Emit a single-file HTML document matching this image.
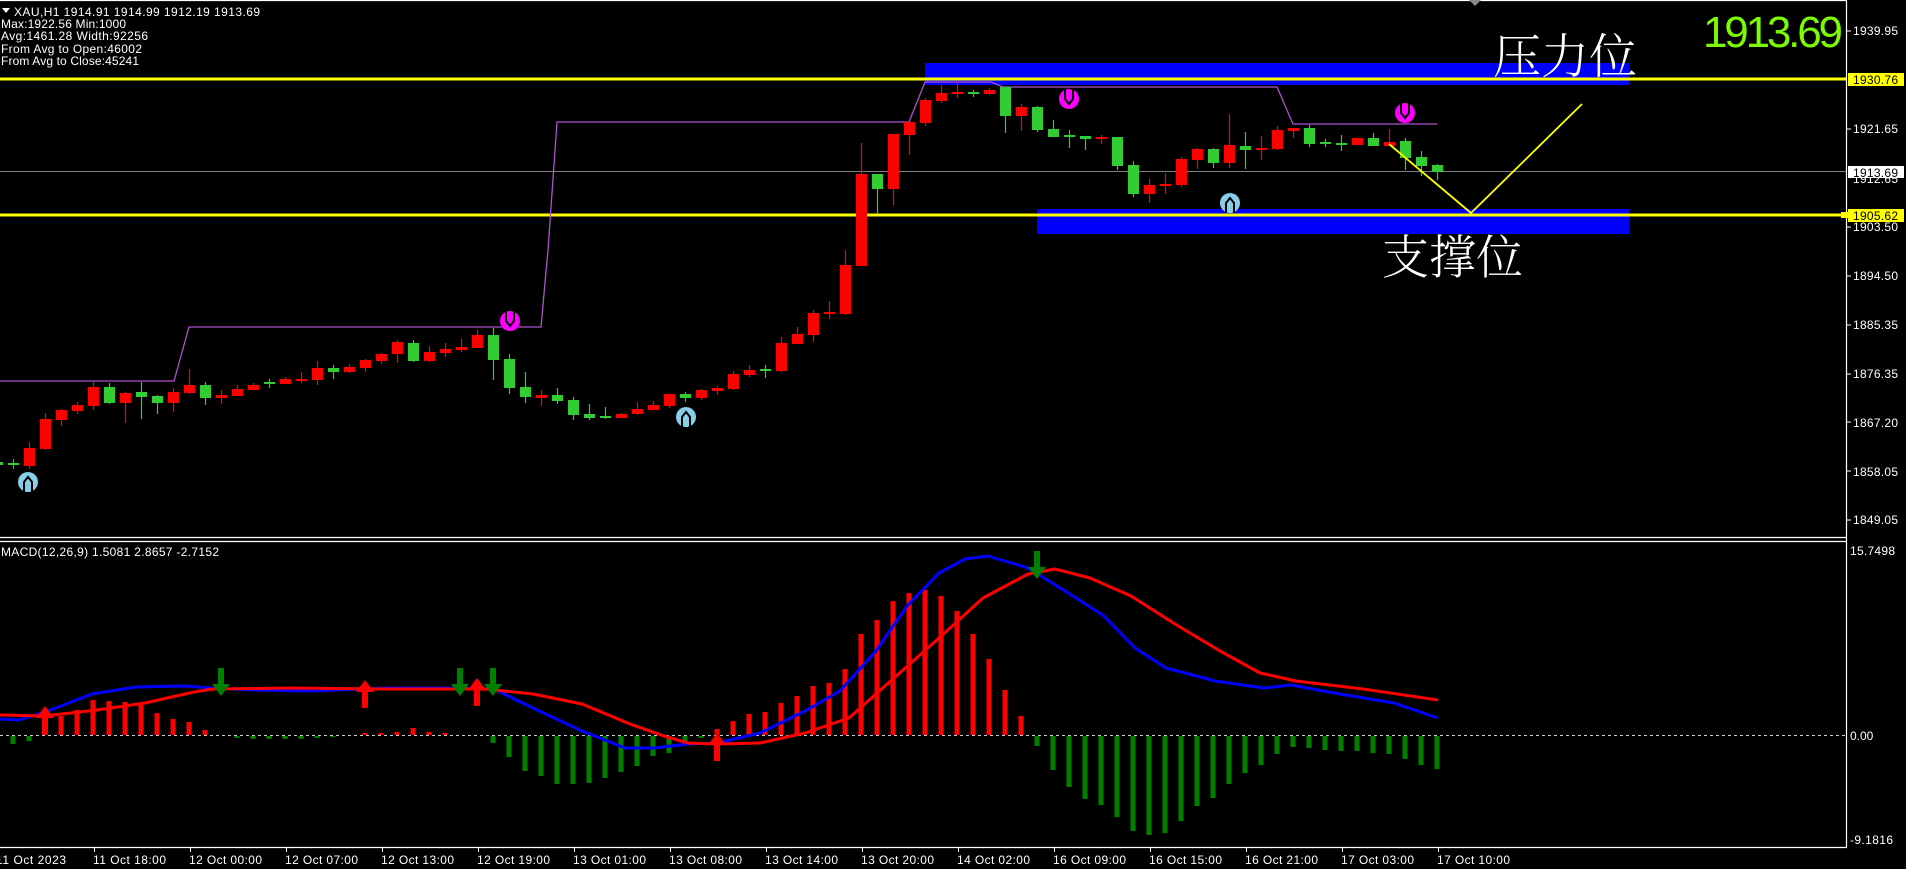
<!DOCTYPE html>
<html><head><meta charset="utf-8"><style>
html,body{margin:0;padding:0;background:#000;width:1906px;height:869px;overflow:hidden}
svg{display:block}
text{font-family:"Liberation Sans",sans-serif;fill:#fff}
</style></head><body>
<svg width="1906" height="869" viewBox="0 0 1906 869" xmlns="http://www.w3.org/2000/svg">
<rect width="1906" height="869" fill="#000"/>
<g stroke="#fff" stroke-width="1.2" fill="none">
<line x1="0" y1="0.5" x2="1847" y2="0.5"/>
<line x1="1846.5" y1="0" x2="1846.5" y2="848"/>
<line x1="0" y1="537.5" x2="1847" y2="537.5"/>
<line x1="0" y1="541.5" x2="1847" y2="541.5"/>
<line x1="0" y1="847.5" x2="1847" y2="847.5"/>
</g>
<polygon points="1469,0 1481,0 1475,6" fill="#888"/>
<rect x="925" y="63" width="704" height="22" fill="#0000ff"/>
<rect x="1037" y="209" width="592" height="25" fill="#0000ff"/>
<line x1="0" y1="171.5" x2="1846" y2="171.5" stroke="#808080" stroke-width="1"/>
<line x1="0" y1="79" x2="1846" y2="79" stroke="#ffff00" stroke-width="3"/>
<line x1="0" y1="215" x2="1846" y2="215" stroke="#ffff00" stroke-width="3"/>
<polyline fill="none" stroke="#b050d0" stroke-width="1.3" points="0,381 174,381 189,327 541,327 548,250 557,122 909,122 925,82 991,82 1003,87 1277,87 1293,124 1437,124"/>
<path stroke="#ff0000" stroke-width="1.2" fill="none" d="M29.5 442V469M45.5 413V450M61.5 409V426M77.5 402V414M93.5 382V410M125.5 392V423M173.5 388V412M189.5 369V394M221.5 390V404M237.5 385V396M253.5 383V390M285.5 377V384M301.5 372V383M317.5 361V385M349.5 364V373M365.5 359V372M381.5 353V364M397.5 340V363M429.5 346V362M445.5 343V357M461.5 339V352M477.5 330V348M541.5 390V406M621.5 413V418M637.5 402V415M653.5 401V410M669.5 394V408M701.5 389V400M717.5 386V395M733.5 371V390M749.5 365V377M781.5 337V372M797.5 327V344M813.5 310V342M829.5 301V319M845.5 250V315M861.5 143V266M893.5 134V205M909.5 122V155M925.5 98V126M941.5 85V103M957.5 81V98M989.5 88V95M1021.5 104V131M1101.5 135V144M1149.5 179V203M1165.5 173V194M1181.5 157V187M1197.5 148V169M1229.5 114V168M1261.5 136V160M1277.5 126V150M1293.5 128V138M1357.5 138V145M1389.5 129V146"/>
<path stroke="#32cd32" stroke-width="1.2" fill="none" d="M13.5 459V469M109.5 383V404M141.5 382V419M157.5 395V414M205.5 382V405M269.5 379V388M333.5 365V379M413.5 340V362M493.5 328V380M509.5 354V394M525.5 372V403M557.5 388V404M573.5 397V420M589.5 404V420M605.5 407V419M685.5 392V402M765.5 365V378M877.5 174V214M973.5 90V97M1005.5 87V133M1037.5 106V132M1053.5 120V137M1069.5 130V148M1085.5 136V150M1117.5 137V170M1133.5 161V197M1213.5 148V168M1245.5 132V169M1309.5 125V147M1325.5 139V147M1341.5 135V151M1373.5 133V146M1405.5 138V170M1421.5 151V176M1437.5 164V180M-2.5 455V470"/>
<g fill="#ff0000">
<rect x="24" y="448" width="11" height="18"/><rect x="40" y="419" width="11" height="30"/><rect x="56" y="410" width="11" height="10"/><rect x="72" y="405" width="11" height="6"/><rect x="88" y="387" width="11" height="19"/><rect x="120" y="393" width="11" height="10"/><rect x="168" y="392" width="11" height="11"/><rect x="184" y="385" width="11" height="8"/><rect x="216" y="395" width="11" height="3"/><rect x="232" y="389" width="11" height="7"/><rect x="248" y="385" width="11" height="5"/><rect x="280" y="379" width="11" height="5"/><rect x="296" y="379" width="11" height="2"/><rect x="312" y="368" width="11" height="12"/><rect x="344" y="367" width="11" height="5"/><rect x="360" y="360" width="11" height="8"/><rect x="376" y="354" width="11" height="7"/><rect x="392" y="342" width="11" height="12"/><rect x="424" y="352" width="11" height="9"/><rect x="440" y="349" width="11" height="4"/><rect x="456" y="347" width="11" height="3"/><rect x="472" y="335" width="11" height="13"/><rect x="536" y="395" width="11" height="3"/><rect x="616" y="414" width="11" height="4"/><rect x="632" y="409" width="11" height="5"/><rect x="648" y="405" width="11" height="5"/><rect x="664" y="394" width="11" height="12"/><rect x="696" y="390" width="11" height="8"/><rect x="712" y="388" width="11" height="3"/><rect x="728" y="374" width="11" height="15"/><rect x="744" y="370" width="11" height="5"/><rect x="776" y="343" width="11" height="28"/><rect x="792" y="334" width="11" height="10"/><rect x="808" y="313" width="11" height="22"/><rect x="824" y="312" width="11" height="2"/><rect x="840" y="265" width="11" height="49"/><rect x="856" y="174" width="11" height="92"/><rect x="888" y="134" width="11" height="55"/><rect x="904" y="122" width="11" height="13"/><rect x="920" y="100" width="11" height="23"/><rect x="936" y="93" width="11" height="8"/><rect x="952" y="92" width="11" height="2"/><rect x="984" y="90" width="11" height="4"/><rect x="1016" y="107" width="11" height="9"/><rect x="1096" y="137" width="11" height="2"/><rect x="1144" y="185" width="11" height="9"/><rect x="1160" y="184" width="11" height="2"/><rect x="1176" y="159" width="11" height="26"/><rect x="1192" y="149" width="11" height="11"/><rect x="1224" y="145" width="11" height="18"/><rect x="1256" y="148" width="11" height="2"/><rect x="1272" y="130" width="11" height="19"/><rect x="1288" y="128" width="11" height="3"/><rect x="1352" y="138" width="11" height="7"/><rect x="1384" y="142" width="11" height="4"/>
</g>
<g fill="#32cd32">
<rect x="8" y="463" width="11" height="2"/><rect x="104" y="387" width="11" height="16"/><rect x="136" y="392" width="11" height="5"/><rect x="152" y="396" width="11" height="7"/><rect x="200" y="385" width="11" height="13"/><rect x="264" y="382" width="11" height="2"/><rect x="328" y="368" width="11" height="4"/><rect x="408" y="343" width="11" height="18"/><rect x="488" y="335" width="11" height="25"/><rect x="504" y="359" width="11" height="29"/><rect x="520" y="387" width="11" height="10"/><rect x="552" y="395" width="11" height="6"/><rect x="568" y="400" width="11" height="15"/><rect x="584" y="414" width="11" height="4"/><rect x="600" y="416" width="11" height="2"/><rect x="680" y="394" width="11" height="4"/><rect x="760" y="369" width="11" height="2"/><rect x="872" y="174" width="11" height="15"/><rect x="968" y="92" width="11" height="2"/><rect x="1000" y="87" width="11" height="29"/><rect x="1032" y="107" width="11" height="23"/><rect x="1048" y="129" width="11" height="8"/><rect x="1064" y="135" width="11" height="2"/><rect x="1080" y="136" width="11" height="3"/><rect x="1112" y="137" width="11" height="29"/><rect x="1128" y="165" width="11" height="29"/><rect x="1208" y="149" width="11" height="14"/><rect x="1240" y="146" width="11" height="4"/><rect x="1304" y="128" width="11" height="16"/><rect x="1320" y="142" width="11" height="2"/><rect x="1336" y="143" width="11" height="2"/><rect x="1368" y="138" width="11" height="8"/><rect x="1400" y="141" width="11" height="17"/><rect x="1416" y="157" width="11" height="9"/><rect x="1432" y="165" width="11" height="7"/><rect x="-8" y="462" width="11" height="3"/>
</g>
<defs>
<g id="up"><circle cx="0" cy="0" r="10" fill="#87ceeb"/><path d="M-4 10V0L0-5L4 0V10" fill="none" stroke="#000" stroke-width="2"/><path d="M-2 10V-1L0-3L2-1V10Z" fill="#87ceeb"/></g>
<g id="dn"><circle cx="0" cy="0" r="10" fill="#ff00ff"/><path d="M-4 -10V0L0 5L4 0V-10" fill="none" stroke="#000" stroke-width="2"/></g>
</defs>
<use href="#up" x="28" y="482"/>
<use href="#up" x="686" y="417"/>
<use href="#up" x="1230" y="203"/>
<use href="#dn" x="510" y="321"/>
<use href="#dn" x="1069" y="99"/>
<use href="#dn" x="1405" y="113"/>
<polyline fill="none" stroke="#ffff00" stroke-width="1.8" points="1389,144 1471,213 1582,104"/>
<text x="1493" y="73" font-size="48" style='font-family:"Noto Serif CJK SC","Noto Sans CJK SC",serif;font-weight:300' fill="#fff">压力位</text>
<text x="1382" y="274" font-size="47" style='font-family:"Noto Serif CJK SC","Noto Sans CJK SC",serif;font-weight:300' fill="#fff">支撑位</text>
<path d="M2 8H10L6 13Z" fill="#fff"/>
<g font-size="12">
<text x="14" y="16" textLength="246">XAU,H1  1914.91 1914.99 1912.19 1913.69</text>
<text x="1" y="28" textLength="125">Max:1922.56 Min:1000</text>
<text x="1" y="40" textLength="147">Avg:1461.28 Width:92256</text>
<text x="1" y="53" textLength="141">From Avg to Open:46002</text>
<text x="1" y="65" textLength="138">From Avg to Close:45241</text>
</g>
<text x="1703" y="47" font-size="44" style="fill:#7cfc00" textLength="140">1913.69</text>
<g font-size="12">
<text x="1853" y="35" textLength="45">1939.95</text>
<text x="1853" y="133" textLength="45">1921.65</text>
<text x="1853" y="231" textLength="45">1903.50</text>
<text x="1853" y="280" textLength="45">1894.50</text>
<text x="1853" y="329" textLength="45">1885.35</text>
<text x="1853" y="378" textLength="45">1876.35</text>
<text x="1853" y="427" textLength="45">1867.20</text>
<text x="1853" y="476" textLength="45">1858.05</text>
<text x="1853" y="524" textLength="45">1849.05</text>
<text x="1853" y="183" textLength="45">1912.65</text>
</g>
<g stroke="#fff" stroke-width="1"><line x1="1847" y1="31" x2="1851" y2="31"/><line x1="1847" y1="129" x2="1851" y2="129"/><line x1="1847" y1="227" x2="1851" y2="227"/><line x1="1847" y1="276" x2="1851" y2="276"/><line x1="1847" y1="325" x2="1851" y2="325"/><line x1="1847" y1="374" x2="1851" y2="374"/><line x1="1847" y1="422" x2="1851" y2="422"/><line x1="1847" y1="471" x2="1851" y2="471"/><line x1="1847" y1="520" x2="1851" y2="520"/></g>
<rect x="1848" y="73" width="56" height="13" fill="#ffff00"/>
<text x="1853" y="84" font-size="12" style="fill:#000" textLength="45">1930.76</text>
<rect x="1848" y="166" width="56" height="12" fill="#fff"/>
<text x="1853" y="177" font-size="12" style="fill:#000" textLength="45">1913.69</text>
<rect x="1848" y="209" width="56" height="13" fill="#ffff00"/>
<rect x="1841" y="212" width="7" height="6" fill="#ffff00"/>
<text x="1853" y="220" font-size="12" style="fill:#000" textLength="45">1905.62</text>
<text x="1" y="556" font-size="12" textLength="218">MACD(12,26,9) 1.5081 2.8657 -2.7152</text>
<line x1="0" y1="735.5" x2="1846" y2="735.5" stroke="#ccc" stroke-width="1" stroke-dasharray="3,3"/>
<g font-size="12"><text x="1850" y="555" textLength="45">15.7498</text><text x="1850" y="740">0.00</text><text x="1850" y="844" textLength="43">-9.1816</text></g>
<path stroke="#ff0000" stroke-width="5" fill="none" d="M45 735V714M61 735V716M77 735V710M93 735V700M109 735V701M125 735V702M141 735V705M157 735V713M173 735V719M189 735V722M205 735V730M365 735V733M381 735V733M397 735V732M413 735V728M429 735V732M445 735V733M717 735V729M733 735V721M749 735V714M765 735V712M781 735V703M797 735V696M813 735V686M829 735V683M845 735V669M861 735V634M877 735V620M893 735V601M909 735V593M925 735V590M941 735V596M957 735V611M973 735V634M989 735V659M1005 735V690M1021 735V716"/>
<path stroke="#008000" stroke-width="5" fill="none" d="M13 736V744M29 736V741M237 736V738M253 736V739M269 736V739M285 736V739M301 736V739M317 736V738M333 736V737M493 736V743M509 736V757M525 736V771M541 736V776M557 736V784M573 736V784M589 736V783M605 736V778M621 736V772M637 736V766M653 736V756M669 736V753M685 736V745M701 736V738M1037 736V746M1053 736V770M1069 736V787M1085 736V799M1101 736V805M1117 736V817M1133 736V831M1149 736V835M1165 736V833M1181 736V821M1197 736V806M1213 736V798M1229 736V784M1245 736V773M1261 736V765M1277 736V754M1293 736V747M1309 736V748M1325 736V750M1341 736V751M1357 736V751M1373 736V753M1389 736V754M1405 736V759M1421 736V765M1437 736V769"/>
<polyline fill="none" stroke="#0000ff" stroke-width="3" stroke-linejoin="round" points="0,719 19,720 48,711 92,694 136,687 184,686 213,688 252,690 310,691 388,688 460,688 494,689 533,708 582,731 625,748 654,748 688,744 717,743 760,733 805,711 840,691 876,651 907,606 939,573 965,559 988,556 1028,568 1073,596 1104,616 1135,648 1166,668 1189,674 1215,681 1264,688 1291,685 1340,694 1394,703 1438,718"/>
<polyline fill="none" stroke="#ff0000" stroke-width="3" stroke-linejoin="round" points="0,715 44,716 97,710 145,703 194,692 213,689 291,688 388,689 485,689 533,694 582,704 630,724 664,736 688,743 717,744 760,743 805,733 849,718 894,678 939,638 983,598 1028,574 1055,569 1090,578 1131,596 1175,624 1220,651 1260,673 1296,681 1363,689 1438,700"/>
<defs>
<path id="au" d="M0 0L9 12H3V28H-3V12H-9Z"/>
<path id="ad" d="M0 0L9 -12H3V-28H-3V-12H-9Z"/>
</defs>
<g fill="#ff0000"><use href="#au" x="45" y="706"/><use href="#au" x="365" y="680"/><use href="#au" x="477" y="678"/><use href="#au" x="717" y="733"/></g>
<g fill="#008000"><use href="#ad" x="221" y="696"/><use href="#ad" x="460" y="696"/><use href="#ad" x="493" y="696"/><use href="#ad" x="1037" y="579"/></g>
<g stroke="#fff" stroke-width="1"><line x1="94.5" y1="848" x2="94.5" y2="852"/><line x1="190.5" y1="848" x2="190.5" y2="852"/><line x1="286.5" y1="848" x2="286.5" y2="852"/><line x1="382.5" y1="848" x2="382.5" y2="852"/><line x1="478.5" y1="848" x2="478.5" y2="852"/><line x1="574.5" y1="848" x2="574.5" y2="852"/><line x1="670.5" y1="848" x2="670.5" y2="852"/><line x1="766.5" y1="848" x2="766.5" y2="852"/><line x1="862.5" y1="848" x2="862.5" y2="852"/><line x1="958.5" y1="848" x2="958.5" y2="852"/><line x1="1054.5" y1="848" x2="1054.5" y2="852"/><line x1="1150.5" y1="848" x2="1150.5" y2="852"/><line x1="1246.5" y1="848" x2="1246.5" y2="852"/><line x1="1342.5" y1="848" x2="1342.5" y2="852"/><line x1="1438.5" y1="848" x2="1438.5" y2="852"/></g>
<g font-size="12">
<text x="-4" y="864" textLength="70">11 Oct 2023</text>
<text x="93" y="864" textLength="73">11 Oct 18:00</text>
<text x="189" y="864" textLength="73">12 Oct 00:00</text>
<text x="285" y="864" textLength="73">12 Oct 07:00</text>
<text x="381" y="864" textLength="73">12 Oct 13:00</text>
<text x="477" y="864" textLength="73">12 Oct 19:00</text>
<text x="573" y="864" textLength="73">13 Oct 01:00</text>
<text x="669" y="864" textLength="73">13 Oct 08:00</text>
<text x="765" y="864" textLength="73">13 Oct 14:00</text>
<text x="861" y="864" textLength="73">13 Oct 20:00</text>
<text x="957" y="864" textLength="73">14 Oct 02:00</text>
<text x="1053" y="864" textLength="73">16 Oct 09:00</text>
<text x="1149" y="864" textLength="73">16 Oct 15:00</text>
<text x="1245" y="864" textLength="73">16 Oct 21:00</text>
<text x="1341" y="864" textLength="73">17 Oct 03:00</text>
<text x="1437" y="864" textLength="73">17 Oct 10:00</text>
</g>
</svg>
</body></html>
